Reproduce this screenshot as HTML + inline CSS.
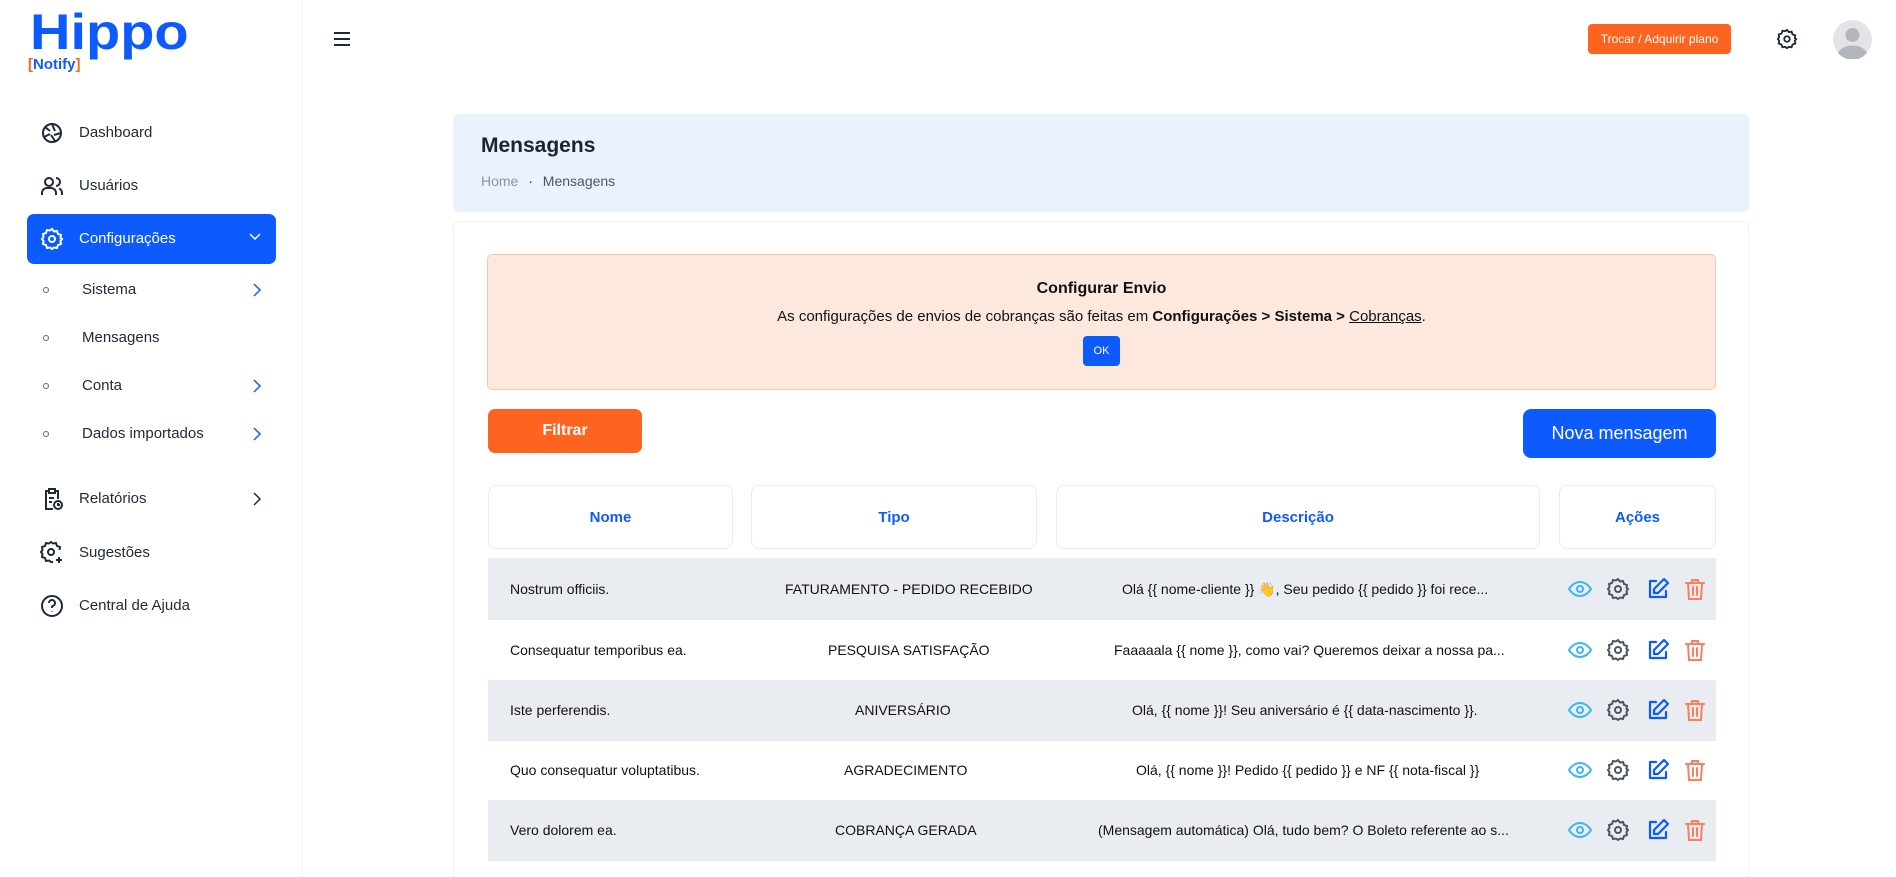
<!DOCTYPE html>
<html><head><meta charset="utf-8"><style>
*{box-sizing:border-box;margin:0;padding:0}
html,body{width:1896px;height:877px;overflow:hidden}
body{background:#fff;font-family:"Liberation Sans",sans-serif;color:#1c2434;position:relative}
.a{position:absolute}
.side{left:0;top:0;width:303px;height:877px;border-right:1px solid #eef0f3;background:#fff}
.nav{position:absolute;left:0;width:303px;font-size:15px;color:#1f2937}
.nav .ico{position:absolute;left:40px;top:-12px}
.nav span{position:absolute;left:79px;top:-9px}
.sub span{left:82px}
.sub i{position:absolute;left:43px;top:-3px;width:6px;height:6px;border:1px solid #666;border-radius:50%}
.nav .chev{position:absolute;left:250px;top:-8px}
.th{position:absolute;top:485px;height:64px;border:1px solid #e8ecf3;border-radius:8px;color:#0d5bff;font-weight:bold;font-size:15px;display:flex;align-items:center;justify-content:center}
.row{position:absolute;left:488px;width:1228px;height:61px;font-size:14px;color:#111}
.row.g{background:#e9edf2}
.row div{position:absolute;top:22px;white-space:nowrap}
.ic{position:absolute;top:18px}
</style></head><body>
<div class="a side">
  <div class="a" style="left:30px;top:6px;font-size:50px;font-weight:bold;color:#0d5bff;letter-spacing:0px;line-height:52px;transform:scaleX(1.12);transform-origin:left">Hippo</div>
  <div class="a" style="left:28px;top:56px;font-size:15px;font-weight:bold;color:#0d5bff"><span style="color:#ff6320">[</span>Notify<span style="color:#ff6320">]</span></div>

  <div class="nav" style="top:133px"><svg class="ico" width="24" height="24" viewBox="0 0 24 24" fill="none" stroke="#1f2937" stroke-width="2"><circle cx="12" cy="12" r="9"/><path d="M12 3l3 7M21 12l-7 2M15 20l-4-6M4 16l6-3M5 6l5 4"/></svg><span>Dashboard</span></div>
  <div class="nav" style="top:186px"><svg class="ico" width="24" height="24" viewBox="0 0 24 24" fill="none" stroke="#1f2937" stroke-width="2"><circle cx="9" cy="8" r="4"/><path d="M2 21v-2a5 5 0 0 1 5-5h4a5 5 0 0 1 5 5v2M16 4a4 4 0 0 1 0 8M22 21v-2a5 5 0 0 0-3-4.5"/></svg><span>Usuários</span></div>
  <div class="a" style="left:27px;top:214px;width:249px;height:50px;background:#0d5bff;border-radius:7px"></div>
  <div class="nav" style="top:239px;color:#fff"><svg class="ico" width="24" height="24" viewBox="0 0 24 24" fill="none" stroke="#fff" stroke-width="2"><circle cx="12" cy="12" r="3"/><path d="M12 2l2 2.5 3-.5 1 3 3 1-.5 3L22 12l-1.5 2 .5 3-3 1-1 3-3-.5L12 22l-2-1.5-3 .5-1-3-3-1 .5-3L2 12l1.5-2L3 7l3-1 1-3 3 .5z"/></svg><span>Configurações</span><svg class="chev" style="left:248px;top:-10px" width="14" height="14" viewBox="0 0 14 14" fill="none" stroke="#fff" stroke-width="1.5"><path d="M2 5l5 5 5-5"/></svg></div>
  <div class="nav sub" style="top:290px"><i></i><span>Sistema</span><svg class="chev" width="14" height="16" viewBox="0 0 14 16" fill="none" stroke="#0d5bff" stroke-width="1.5"><path d="M4 2l6 6-6 6"/></svg></div>
  <div class="nav sub" style="top:338px"><i></i><span>Mensagens</span></div>
  <div class="nav sub" style="top:386px"><i></i><span>Conta</span><svg class="chev" width="14" height="16" viewBox="0 0 14 16" fill="none" stroke="#0d5bff" stroke-width="1.5"><path d="M4 2l6 6-6 6"/></svg></div>
  <div class="nav sub" style="top:434px"><i></i><span>Dados importados</span><svg class="chev" width="14" height="16" viewBox="0 0 14 16" fill="none" stroke="#0d5bff" stroke-width="1.5"><path d="M4 2l6 6-6 6"/></svg></div>
  <div class="nav" style="top:499px"><svg class="ico" width="24" height="24" viewBox="0 0 24 24" fill="none" stroke="#1f2937" stroke-width="2"><path d="M9 4H6v18h7M15 4h3v8M9 2h6v4H9zM9 11h5M9 15h3"/><circle cx="18" cy="18" r="4"/><path d="M18 16v2h2"/></svg><span>Relatórios</span><svg class="chev" width="14" height="16" viewBox="0 0 14 16" fill="none" stroke="#1f2937" stroke-width="1.5"><path d="M4 2l6 6-6 6"/></svg></div>
  <div class="nav" style="top:553px"><svg class="ico" width="24" height="24" viewBox="0 0 24 24" fill="none" stroke="#1f2937" stroke-width="2"><circle cx="11" cy="11" r="3"/><path d="M13 21l-2 0-2-1.5-3 .5-1-3-3-1 .5-3L1 11l1.5-2L2 6l3-1 1-3 3 .5L11 1l2 1.5 3-.5 1 3 3 1-.5 3M19 16v6M16 19h6"/></svg><span>Sugestões</span></div>
  <div class="nav" style="top:606px"><svg class="ico" width="24" height="24" viewBox="0 0 24 24" fill="none" stroke="#1f2937" stroke-width="2"><circle cx="12" cy="12" r="10"/><path d="M9 9a3 3 0 1 1 4 2.8c-.7.3-1 1-1 1.7V14M12 17v.5"/></svg><span>Central de Ajuda</span></div>
</div>

<svg class="a" style="left:333px;top:30px" width="18" height="18" viewBox="0 0 18 18" stroke="#1f2937" stroke-width="2"><path d="M1 3h16M1 9h16M1 15h16"/></svg>
<div class="a" style="left:1588px;top:24px;width:143px;height:30px;background:#ff6320;border-radius:4px;color:#fff;font-size:12px;line-height:30px;text-align:center">Trocar / Adquirir plano</div>
<svg class="a" style="left:1776px;top:28px" width="22" height="22" viewBox="0 0 24 24" fill="none" stroke="#1f2937" stroke-width="2"><circle cx="12" cy="12" r="3"/><path d="M12 2l2 2.5 3-.5 1 3 3 1-.5 3L22 12l-1.5 2 .5 3-3 1-1 3-3-.5L12 22l-2-1.5-3 .5-1-3-3-1 .5-3L2 12l1.5-2L3 7l3-1 1-3 3 .5z"/></svg>
<svg class="a" style="left:1833px;top:20px" width="39" height="39" viewBox="0 0 39 39"><circle cx="19.5" cy="19.5" r="19.5" fill="#e2e4e7"/><circle cx="19.5" cy="15" r="7" fill="#b3b7bc"/><path d="M5 33a15 10 0 0 1 29 0a19 19 0 0 1-29 0z" fill="#b3b7bc"/></svg>

<div class="a" style="left:453px;top:114px;width:1296px;height:98px;background:#eaf2fd;border-radius:6px"></div>
<div class="a" style="left:481px;top:134px;font-size:21px;font-weight:bold;color:#1c2434">Mensagens</div>
<div class="a" style="left:481px;top:173px;font-size:14px;color:#8a94a6">Home <span style="color:#1c2434;margin:0 6px">·</span> <span style="color:#4b5563">Mensagens</span></div>

<div class="a" style="left:453px;top:221px;width:1296px;height:680px;background:#fff;border:1px solid #f1f2f4;border-radius:6px"></div>
<div class="a" style="left:487px;top:254px;width:1229px;height:136px;background:#fde8de;border:1px solid #fcc6ac;border-radius:5px;text-align:center;font-size:15px;color:#111">
  <div style="margin-top:25px;font-weight:bold;font-size:16px">Configurar Envio</div>
  <div style="margin-top:10px">As configurações de envios de cobranças são feitas em <b>Configurações &gt; Sistema &gt;</b> <u>Cobranças</u>.</div>
  <div style="display:inline-block;margin-top:11px;width:37px;height:30px;background:#0d5bff;border-radius:4px;color:#fff;font-size:11px;line-height:30px">OK</div>
</div>
<div class="a" style="left:488px;top:409px;width:154px;height:44px;background:#ff6320;border-radius:7px;color:#fff;font-size:16px;font-weight:bold;line-height:44px;text-align:center">Filtrar</div>
<div class="a" style="left:1523px;top:409px;width:193px;height:49px;background:#0d5bff;border-radius:8px;color:#fff;font-size:18px;line-height:49px;text-align:center">Nova mensagem</div>

<div class="th" style="left:488px;width:245px">Nome</div>
<div class="th" style="left:751px;width:286px">Tipo</div>
<div class="th" style="left:1056px;width:484px">Descrição</div>
<div class="th" style="left:1559px;width:157px">Ações</div>
<div class="a" style="left:488px;top:558px;width:1228px;height:1px;background:#e8ecf3"></div>

<svg width="0" height="0" style="position:absolute"><defs>
<g id="eye" fill="none" stroke="#3db5f5" stroke-width="2"><path d="M1 12s4-7 11-7 11 7 11 7-4 7-11 7S1 12 1 12z"/><circle cx="12" cy="12" r="3"/></g>
<g id="gear" fill="none" stroke="#4b5563" stroke-width="2"><circle cx="12" cy="12" r="3"/><path d="M12 2l2 2.5 3-.5 1 3 3 1-.5 3L22 12l-1.5 2 .5 3-3 1-1 3-3-.5L12 22l-2-1.5-3 .5-1-3-3-1 .5-3L2 12l1.5-2L3 7l3-1 1-3 3 .5z"/></g>
<g id="edit" fill="none" stroke="#0d5bff" stroke-width="2.2" stroke-linecap="round" stroke-linejoin="round"><path d="M10 4H4v16h16v-6"/><path d="M18 2l4 4-10 10H8v-4z"/></g>
<g id="trash" fill="none" stroke="#ff7c5c" stroke-width="2" stroke-linecap="round"><path d="M3 6h18M9 6V3h6v3M5 6l1 16h12l1-16M10 10v8M14 10v8"/></g>
</defs></svg>

<div class="row g" style="top:559px"><div style="left:22px">Nostrum officiis.</div><div style="left:297px">FATURAMENTO - PEDIDO RECEBIDO</div><div style="left:634px">Olá {{ nome-cliente }} 👋, Seu pedido {{ pedido }} foi rece...</div>
<svg class="ic" style="left:1080px" width="24" height="24"><use href="#eye"/></svg><svg class="ic" style="left:1118px" width="24" height="24"><use href="#gear"/></svg><svg class="ic" style="left:1158px" width="24" height="24"><use href="#edit"/></svg><svg class="ic" style="left:1195px" width="24" height="24"><use href="#trash"/></svg></div>
<div class="row" style="top:620px"><div style="left:22px">Consequatur temporibus ea.</div><div style="left:340px">PESQUISA SATISFAÇÃO</div><div style="left:626px">Faaaaala {{ nome }}, como vai? Queremos deixar a nossa pa...</div>
<svg class="ic" style="left:1080px" width="24" height="24"><use href="#eye"/></svg><svg class="ic" style="left:1118px" width="24" height="24"><use href="#gear"/></svg><svg class="ic" style="left:1158px" width="24" height="24"><use href="#edit"/></svg><svg class="ic" style="left:1195px" width="24" height="24"><use href="#trash"/></svg></div>
<div class="row g" style="top:680px"><div style="left:22px">Iste perferendis.</div><div style="left:367px">ANIVERSÁRIO</div><div style="left:644px">Olá, {{ nome }}! Seu aniversário é {{ data-nascimento }}.</div>
<svg class="ic" style="left:1080px" width="24" height="24"><use href="#eye"/></svg><svg class="ic" style="left:1118px" width="24" height="24"><use href="#gear"/></svg><svg class="ic" style="left:1158px" width="24" height="24"><use href="#edit"/></svg><svg class="ic" style="left:1195px" width="24" height="24"><use href="#trash"/></svg></div>
<div class="row" style="top:740px"><div style="left:22px">Quo consequatur voluptatibus.</div><div style="left:356px">AGRADECIMENTO</div><div style="left:648px">Olá, {{ nome }}! Pedido {{ pedido }} e NF {{ nota-fiscal }}</div>
<svg class="ic" style="left:1080px" width="24" height="24"><use href="#eye"/></svg><svg class="ic" style="left:1118px" width="24" height="24"><use href="#gear"/></svg><svg class="ic" style="left:1158px" width="24" height="24"><use href="#edit"/></svg><svg class="ic" style="left:1195px" width="24" height="24"><use href="#trash"/></svg></div>
<div class="row g" style="top:800px"><div style="left:22px">Vero dolorem ea.</div><div style="left:347px">COBRANÇA GERADA</div><div style="left:610px">(Mensagem automática) Olá, tudo bem? O Boleto referente ao s...</div>
<svg class="ic" style="left:1080px" width="24" height="24"><use href="#eye"/></svg><svg class="ic" style="left:1118px" width="24" height="24"><use href="#gear"/></svg><svg class="ic" style="left:1158px" width="24" height="24"><use href="#edit"/></svg><svg class="ic" style="left:1195px" width="24" height="24"><use href="#trash"/></svg></div>
</body></html>
